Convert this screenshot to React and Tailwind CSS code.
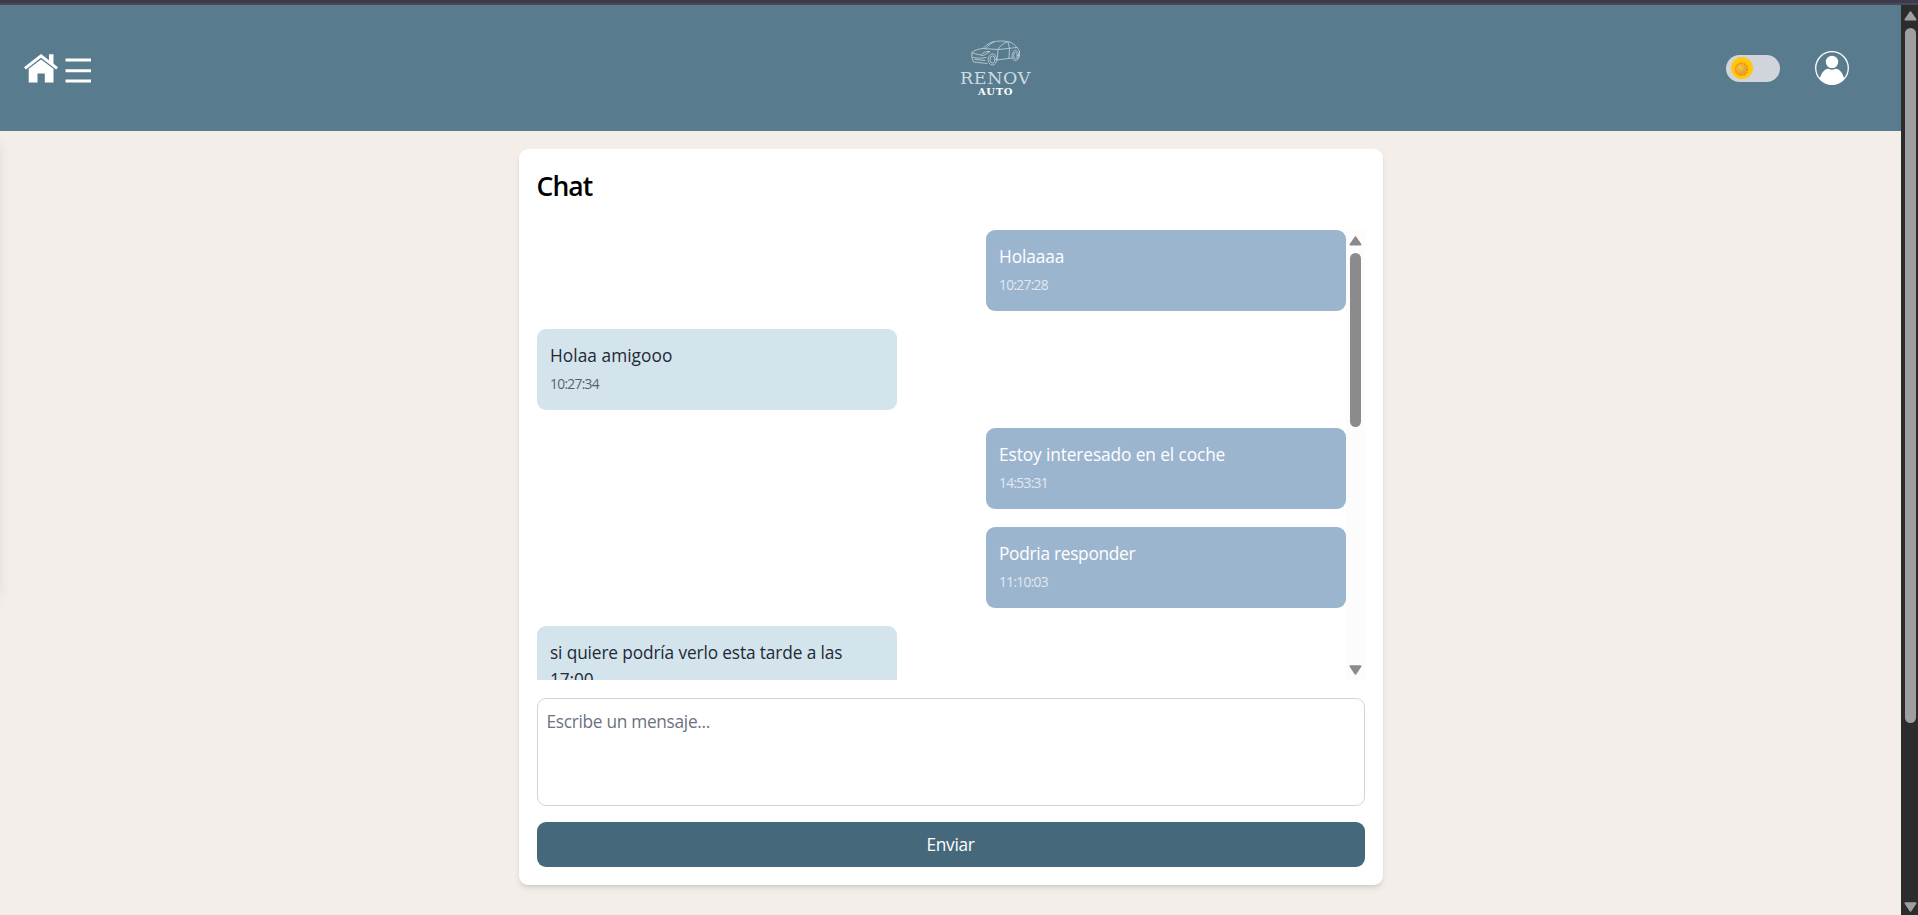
const messages = [
  { text: 'Holaaaa', time: '10:27:28', mine: true, track: 'tracking-[-0.1px]' },
  { text: 'Holaa amigooo', time: '10:27:34', mine: false, track: 'tracking-[0.05px]' },
  { text: 'Estoy interesado en el coche', time: '14:53:31', mine: true, track: 'tracking-[-0.1px]' },
  { text: 'Podria responder', time: '11:10:03', mine: true, track: 'tracking-[-0.28px]' },
  { text: 'si quiere podría verlo esta tarde a las 17:00', time: '11:12:40', mine: false, track: 'tracking-[-0.13px]' },
];

function Arrow({ down = false, className }) {
  return (
    <svg viewBox="0 0 13 10" className={`h-[10px] w-[13px] shrink-0 ${className}`} fill="currentColor" stroke="currentColor" strokeWidth="2" strokeLinejoin="round">
      <path d={down ? 'M1.5 1.2h10L6.5 8.6z' : 'M1.5 8.6h10L6.5 1.4z'} />
    </svg>
  );
}

function Logo() {
  return (
    <div className="flex w-[91px] flex-col items-center">
      <svg viewBox="0 0 50 26" className="h-[26px] w-[50px]" fill="none" stroke="#b9ccd5" strokeWidth="0.9" strokeLinecap="round" strokeLinejoin="round">
        <path d="M1 12.5C3 10 8 9 12 8.5C15 5 19 2.5 22 1.8C28 .6 36 .8 40 2.5C44 4.500 46 8 48.500 10.500V16L47 19" />
        <path d="M12 8.500L27 9.500C29 6 32 3 36 2.200M15 8.200C18 5 20 3 23 2.200M27 9.500L26 20M27 9.500C34 9 40 8 46 7.500M37 1.800L38.500 8.500L38 18" />
        <path d="M1 12.500L.8 17L2.500 22L16 23.500M1.500 13C6 14.500 10 15 12.500 15.500L19 11.500C15 11 11.500 12.500 10.500 15M2 17.500C6 18.500 11 18.500 15 17.500M4 19.500L14 20.500M26 20L41 18" />
        <ellipse cx="21.500" cy="19.500" rx="4.300" ry="5.600" />
        <ellipse cx="21.500" cy="19.500" rx="2.500" ry="3.600" />
        <ellipse cx="44.500" cy="15.500" rx="3.300" ry="5.200" />
        <ellipse cx="44.500" cy="15.500" rx="1.800" ry="3.300" />
      </svg>
      <div className="mt-[4px] h-[16px] font-['DejaVu_Serif',serif] text-[17.500px] leading-[16px] tracking-[0.6px] text-[#cddbe2]">RENOV</div>
      <div className="h-[11px] font-['DejaVu_Serif',serif] text-[10px] font-bold leading-[11px] tracking-[0.6px] text-white">AUTO</div>
    </div>
  );
}

function Header() {
  return (
    <header className="grid h-[126px] shrink-0 grid-cols-[950px_auto_1fr] items-center bg-[#587c8d]">
      <div className="flex items-center gap-[7.500px] pl-[23.500px]">
        <svg viewBox="0 0 34 29" className="h-[29px] w-[34px]" fill="white">
          <path d="M17 0L25 6.200V.3H29.500V9.800L34 13.200L32.200 15.400L17 3.800L1.800 15.400L0 13.200Z" />
          <path d="M17 5.400L29.500 14.800V28.500H20.800V19.500H13.500V28.500H4.700V14.800Z" />
        </svg>
        <svg viewBox="0 0 26 25" className="mt-[4px] h-[25px] w-[26px]" stroke="white" strokeWidth="3" strokeLinecap="butt">
          <path d="M.5 2H26M.5 12.700H26M.5 23H26" />
        </svg>
      </div>
      <div className="pt-[1px]">
        <Logo />
      </div>
      <div className="flex items-center justify-end gap-[35px] pr-[52.500px]">
        <div className="mt-[1px] flex h-[27px] w-[54px] items-center rounded-full bg-[#d1d5db] pl-[5px]">
          <svg viewBox="0 0 22 22" className="mb-[1px] h-[22px] w-[22px]">
            <defs>
              <radialGradient id="sun" cx="40%" cy="35%" r="70%">
                <stop offset="0" stopColor="#f2c94a" />
                <stop offset="1" stopColor="#dd971f" />
              </radialGradient>
            </defs>
            <circle cx="11" cy="11" r="11" fill="#ffc80a" />
            <circle cx="10.500" cy="12.300" r="6" fill="none" stroke="#fb7f1e" strokeWidth="1.500" strokeDasharray="1.800 .7" />
            <circle cx="10.500" cy="12.300" r="5.300" fill="url(#sun)" />
          </svg>
        </div>
        <svg viewBox="0 0 34 34" className="h-[34px] w-[34px]">
          <clipPath id="avatar"><circle cx="17" cy="17" r="16.500" /></clipPath>
          <circle cx="17" cy="17" r="16.300" fill="none" stroke="white" strokeWidth="1.300" />
          <circle cx="17" cy="11" r="6.200" fill="white" />
          <path clipPath="url(#avatar)" d="M4.500 29C6 21.500 9.500 18 13.500 17.700C15.500 19 18.500 19 20.500 17.700C24.500 18 28 21.500 29.500 29L26 34H8Z" fill="white" />
        </svg>
      </div>
    </header>
  );
}

function Message({ text, time, mine, track }) {
  return (
    <div
      className={`min-h-[81px] w-[360px] shrink-0 rounded-[9px] px-[13.500px] pt-[12.500px] ${
        mine ? 'self-end bg-[#9cb5cf] text-white' : 'self-start bg-[#d3e4ec] text-[#1f2937]'
      }`}
    >
      <p className={`text-[17.300px] leading-[27px] ${track}`}>{text}</p>
      <p className="mt-[5.500px] text-[13.800px] leading-[20px] tracking-[-0.7px] opacity-70">{time}</p>
    </div>
  );
}

function Chat() {
  return (
    <section className="flex w-[864px] flex-col rounded-[9px] bg-white p-[18px] shadow-[0_4px_6px_-1px_rgba(0,0,0,0.1),0_2px_4px_-2px_rgba(0,0,0,0.1)]">
      <h2 className="h-[63px] text-[26.500px] font-semibold leading-[38px] tracking-[-0.9px] text-black">Chat</h2>
      <div className="flex h-[450px]">
        <div className="flex flex-1 flex-col gap-[18px] overflow-hidden">
          {messages.map((m) => (
            <Message key={m.time} {...m} />
          ))}
        </div>
        <div className="flex w-[19px] flex-col items-center bg-[#fcfcfc] pt-[6px] pb-[5px] text-[#8b8b8b]">
          <Arrow />
          <div className="mt-[7px] h-[174px] w-[11px] rounded-full bg-[#8b8b8b]" />
          <Arrow down className="mt-auto" />
        </div>
      </div>
      <textarea
        placeholder="Escribe un mensaje..."
        className="mt-[18px] block h-[108px] w-full resize-none rounded-[9px] border border-[#d1d5db] bg-white px-[9px] py-[9px] text-[17.300px] leading-[27px] tracking-[-0.3px] placeholder:text-[#6b7280]"
      />
      <button className="mt-[16px] h-[45px] w-full rounded-[9px] bg-[#45697b] text-[17.300px] leading-[27px] tracking-[-0.3px] text-white">Enviar</button>
    </section>
  );
}

export default function App() {
  return (
    <div className="flex h-[915px] w-full flex-col overflow-hidden bg-[#f3eeea] font-['Open_Sans','Noto_Sans',sans-serif]">
      <div className="h-[5px] shrink-0 border-b-2 border-[#4b494f] bg-[#3f394f]" />
      <div className="flex min-h-0 flex-1">
        <div className="relative flex min-w-0 flex-1 flex-col overflow-hidden">
          <Header />
          <main className="flex justify-center pt-[18px]">
            <Chat />
          </main>
          <div className="absolute top-[126px] -left-[280px] h-[460px] w-[280px] shadow-[0_10px_15px_-3px_rgba(0,0,0,0.1),0_4px_6px_-4px_rgba(0,0,0,0.1)]" />
        </div>
        <div className="flex w-[17px] flex-col items-center bg-[#2c2c2c] pt-[6px] pb-[3px] pl-[2px] text-[#9f9f9f]">
          <Arrow />
          <div className="mt-[7px] h-[695px] w-[11px] rounded-full bg-[#9f9f9f]" />
          <Arrow down className="mt-auto" />
        </div>
      </div>
    </div>
  );
}
